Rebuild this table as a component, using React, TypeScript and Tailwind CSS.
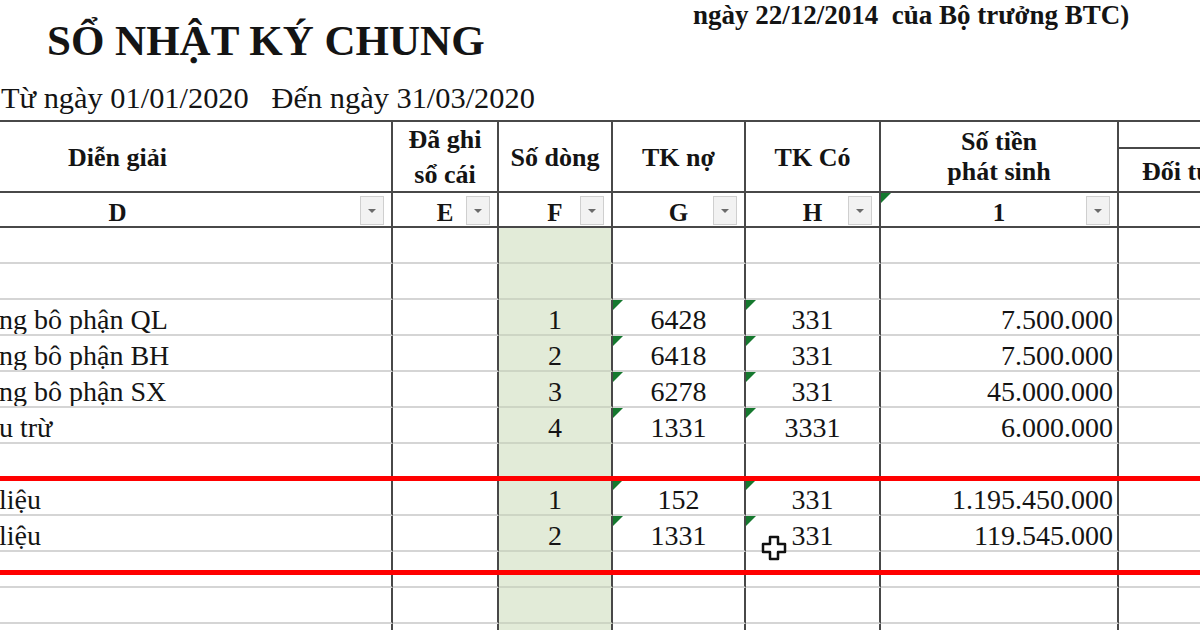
import React from 'react';

type Row = { d?: string; f?: string; g?: string; h?: string; i?: string };

const rows: Row[] = [
  {},
  {},
  { d: 'ng bô phận QL', f: '1', g: '6428', h: '331', i: '7.500.000' },
  { d: 'ng bô phận BH', f: '2', g: '6418', h: '331', i: '7.500.000' },
  { d: 'ng bô phận SX', f: '3', g: '6278', h: '331', i: '45.000.000' },
  { d: 'u trừ', f: '4', g: '1331', h: '3331', i: '6.000.000' },
  {},
  { d: 'liệu', f: '1', g: '152', h: '331', i: '1.195.450.000' },
  { d: 'liệu', f: '2', g: '1331', h: '331', i: '119.545.000' },
  {},
  {},
  {},
];

const grid = 'grid grid-cols-[549px_106px_114px_133px_135px_238px_300px]';
const sep = 'border-r-2 border-r-[#484848]';

// green "number stored as text" marker
function Flag() {
  return (
    <span className="absolute left-0 top-0 w-0 h-0 border-t-[10px] border-t-[#15782e] border-r-[10px] border-r-transparent" />
  );
}

// autofilter button
function Drop() {
  return (
    <span className="absolute right-[7px] top-[3px] w-[24px] h-[29px] bg-[#f2f2f2] border border-[#cfcfcf] flex items-center justify-center">
      <span className="w-0 h-0 border-l-[4px] border-l-transparent border-r-[4px] border-r-transparent border-t-[4px] border-t-[#6b6b6b]" />
    </span>
  );
}

function CrossCursor() {
  return (
    <svg width="28" height="28" viewBox="0 0 28 28" className="absolute left-[760px] top-[534px]">
      <path
        d="M10 3h8v7h7v8h-7v7h-8v-7H3v-8h7z"
        fill="#ffffff"
        stroke="#111111"
        strokeWidth="2.5"
        strokeLinejoin="round"
      />
    </svg>
  );
}

export default function App() {
  const letters = ['D', 'E', 'F', 'G', 'H', '1'];

  return (
    <div className="relative w-[1200px] h-[630px] overflow-hidden bg-white text-[#141414] font-['Liberation_Serif','Times_New_Roman',serif]">
      {/* Title block */}
      <div className="flex h-[120px]">
        <div className="w-[693px] shrink-0">
          <h1 className="pl-[47px] pt-[16px] text-[43px] font-bold leading-[50px] whitespace-nowrap">
            SỔ NHẬT KÝ CHUNG
          </h1>
          <p className="mt-[14px] pl-[1px] text-[30.4px] leading-[36px] whitespace-pre">
            Từ ngày 01/01/2020   Đến ngày 31/03/2020
          </p>
        </div>
        <p className="text-[27px] font-bold leading-[30px] whitespace-pre">
          ngày 22/12/2014  của Bộ trưởng BTC)
        </p>
      </div>

      {/* Sheet */}
      <div className="-ml-[156px] w-max border-t-2 border-[#484848]">
        {/* Header */}
        <div className={`${grid} text-[26px] font-bold`}>
          <div className={`h-[71px] border-b-2 border-b-[#484848] ${sep} flex items-center justify-center pt-[2px]`}>
            Diễn giải
          </div>
          <div className={`h-[71px] border-b-2 border-b-[#484848] ${sep} flex items-center justify-center text-center leading-[35px]`}>
            Đã ghi
            <br />
            sổ cái
          </div>
          <div className={`h-[71px] border-b-2 border-b-[#484848] ${sep} flex items-center justify-center pt-[2px]`}>
            Số dòng
          </div>
          <div className={`h-[71px] border-b-2 border-b-[#484848] ${sep} flex items-center justify-center pt-[2px]`}>
            TK nợ
          </div>
          <div className={`h-[71px] border-b-2 border-b-[#484848] ${sep} flex items-center justify-center pt-[2px]`}>
            TK Có
          </div>
          <div className={`h-[71px] border-b-2 border-b-[#484848] ${sep} flex items-center justify-center text-center leading-[30px]`}>
            Số tiền
            <br />
            phát sinh
          </div>
          <div className="h-[71px] border-b-2 border-b-[#484848] flex flex-col">
            <div className="h-[36px] border-b-2 border-b-[#484848]" />
            <div className="flex-1 flex items-center pl-[23px] pt-[3px] whitespace-nowrap">Đối tượng</div>
          </div>
        </div>

        {/* Column letters */}
        <div className={`${grid} text-[25px] font-bold`}>
          {letters.map((l, idx) => (
            <div
              key={idx}
              className={`relative h-[35px] border-b-2 border-b-[#484848] ${sep} flex items-end justify-center leading-[26px]`}
            >
              {l === '1' && <Flag />}
              <span>{l}</span>
              <Drop />
            </div>
          ))}
          <div className="h-[35px] border-b-2 border-b-[#484848]" />
        </div>

        {/* Data rows */}
        {rows.map((r, idx) => (
          <div key={idx} className={`${grid} text-[28px] leading-[28px]`}>
            <div className={`h-[36px] border-b-2 border-b-[#d5d5d5] ${sep} flex items-end pl-[155px] whitespace-nowrap overflow-hidden`}>
              {r.d}
            </div>
            <div className={`h-[36px] border-b-2 border-b-[#d5d5d5] ${sep}`} />
            <div className={`h-[36px] border-b-2 border-b-[#cdd5c4] ${sep} bg-[#e2ebd8] flex items-end justify-center`}>
              {r.f}
            </div>
            <div className={`relative h-[36px] border-b-2 border-b-[#d5d5d5] ${sep} flex items-end justify-center`}>
              {r.g && <Flag />}
              {r.g}
            </div>
            <div className={`relative h-[36px] border-b-2 border-b-[#d5d5d5] ${sep} flex items-end justify-center`}>
              {r.h && <Flag />}
              {r.h}
            </div>
            <div className={`h-[36px] border-b-2 border-b-[#d5d5d5] ${sep} flex items-end justify-end pr-[4px]`}>
              {r.i}
            </div>
            <div className="h-[36px] border-b-2 border-b-[#d5d5d5]" />
          </div>
        ))}
      </div>

      {/* Red highlight lines drawn over the sheet */}
      <div className="absolute left-0 right-0 top-[476px] h-[5px] bg-[#ff0000]" />
      <div className="absolute left-0 right-0 top-[570px] h-[5px] bg-[#ff0000]" />

      <CrossCursor />
    </div>
  );
}
